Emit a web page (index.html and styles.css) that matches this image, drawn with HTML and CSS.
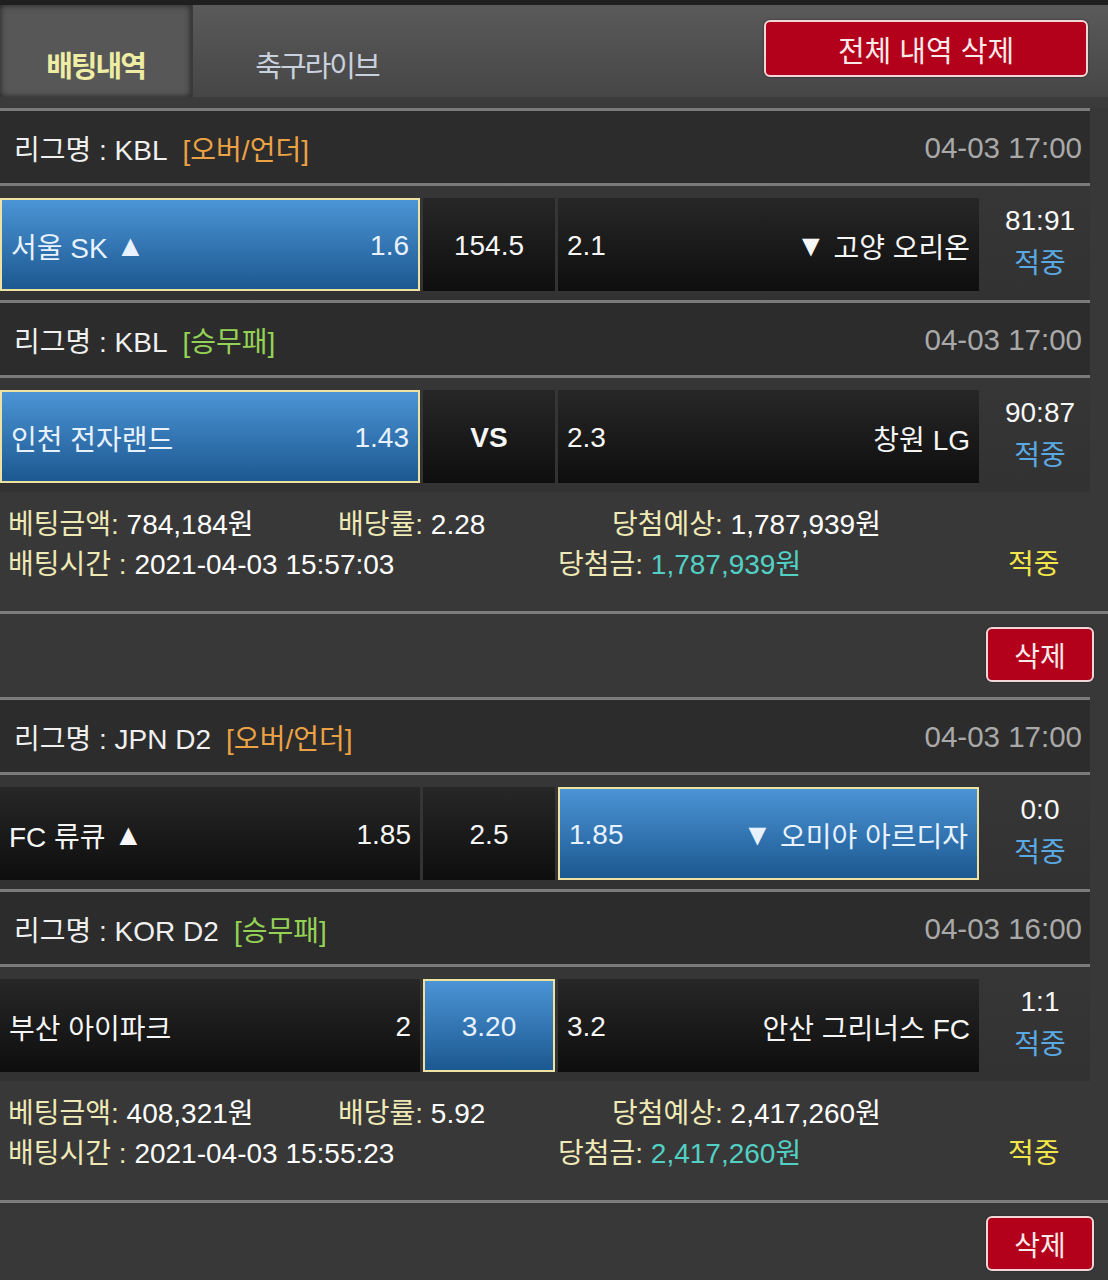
FILE: index.html
```html
<!DOCTYPE html>
<html lang="ko">
<head>
    <meta charset="UTF-8">
    <title>배팅내역</title>
    <link rel="stylesheet" href="styles.css">
</head>
<body>
    <div class="topbar">
        <div class="tabs">
            <div class="tab active">배팅내역</div>
            <div class="tab">축구라이브</div>
        </div>
        <button class="btn-red btn-all">전체 내역 삭제</button>
    </div>
    <div class="band"></div>

    <section class="bet">
        <div class="league">
            <span class="lname">리그명 : KBL</span>
            <span class="ltype over">[오버/언더]</span>
            <span class="date">04-03 17:00</span>
        </div>
        <div class="match">
            <div class="cell home sel"><span>서울 SK <i class="arrow">▲</i></span><span>1.6</span></div>
            <div class="cell mid">154.5</div>
            <div class="cell away"><span>2.1</span><span><i class="arrow">▼</i> 고양 오리온</span></div>
            <div class="score"><span>81:91</span><span class="hit">적중</span></div>
        </div>
        <div class="league">
            <span class="lname">리그명 : KBL</span>
            <span class="ltype wdl">[승무패]</span>
            <span class="date">04-03 17:00</span>
        </div>
        <div class="match">
            <div class="cell home sel"><span>인천 전자랜드</span><span>1.43</span></div>
            <div class="cell mid vs">VS</div>
            <div class="cell away"><span>2.3</span><span>창원 LG</span></div>
            <div class="score"><span>90:87</span><span class="hit">적중</span></div>
        </div>
        <div class="info">
            <div class="info-row">
                <span class="col-a"><em>베팅금액:</em> 784,184원</span>
                <span class="col-b"><em>배당률:</em> 2.28</span>
                <span><em>당첨예상:</em> 1,787,939원</span>
            </div>
            <div class="info-row">
                <span class="col-wide"><em>배팅시간 :</em> 2021-04-03 15:57:03</span>
                <span class="col-win"><em>당첨금:</em> <b class="won">1,787,939원</b></span>
                <span class="result">적중</span>
            </div>
        </div>
        <div class="actions">
            <button class="btn-red btn-del">삭제</button>
        </div>
    </section>

    <section class="bet">
        <div class="league">
            <span class="lname">리그명 : JPN D2</span>
            <span class="ltype over">[오버/언더]</span>
            <span class="date">04-03 17:00</span>
        </div>
        <div class="match">
            <div class="cell home"><span>FC 류큐 <i class="arrow">▲</i></span><span>1.85</span></div>
            <div class="cell mid">2.5</div>
            <div class="cell away sel"><span>1.85</span><span><i class="arrow">▼</i> 오미야 아르디자</span></div>
            <div class="score"><span>0:0</span><span class="hit">적중</span></div>
        </div>
        <div class="league">
            <span class="lname">리그명 : KOR D2</span>
            <span class="ltype wdl">[승무패]</span>
            <span class="date">04-03 16:00</span>
        </div>
        <div class="match">
            <div class="cell home"><span>부산 아이파크</span><span>2</span></div>
            <div class="cell mid sel">3.20</div>
            <div class="cell away"><span>3.2</span><span>안산 그리너스 FC</span></div>
            <div class="score"><span>1:1</span><span class="hit">적중</span></div>
        </div>
        <div class="info">
            <div class="info-row">
                <span class="col-a"><em>베팅금액:</em> 408,321원</span>
                <span class="col-b"><em>배당률:</em> 5.92</span>
                <span><em>당첨예상:</em> 2,417,260원</span>
            </div>
            <div class="info-row">
                <span class="col-wide"><em>배팅시간 :</em> 2021-04-03 15:55:23</span>
                <span class="col-win"><em>당첨금:</em> <b class="won">2,417,260원</b></span>
                <span class="result">적중</span>
            </div>
        </div>
        <div class="actions">
            <button class="btn-red btn-del">삭제</button>
        </div>
    </section>
</body>
</html>
```

FILE: styles.css
```css
body {
    margin: 0;
    background: #383838;
    color: #f4f4f4;
    font-family: "Liberation Sans", "Noto Sans CJK KR", sans-serif;
    font-size: 28px;
    overflow: hidden;
}

.topbar {
    display: flex;
    justify-content: space-between;
    align-items: flex-start;
    height: 92px;
    border-top: 5px solid #1f1f1f;
    background: linear-gradient(#5a5a5a, #464646);
}

.tabs {
    display: flex;
    height: 92px;
}

.tab {
    width: 248px;
    display: flex;
    align-items: center;
    justify-content: center;
    padding-top: 26px;
    box-sizing: border-box;
    color: #c9d0de;
    font-size: 29px;
    letter-spacing: -2px;
}

.tab.active {
    width: 193px;
    background: #575757;
    box-shadow: inset 0 0 6px #1e1e1e;
    border-right: 2px solid #3a3a3a;
    color: #eeeda4;
    font-weight: bold;
}

.btn-red {
    background: #b3001b;
    color: #fbeaea;
    border: 2px solid #f1d6d8;
    border-radius: 6px;
    font-family: inherit;
    font-size: 28px;
    box-shadow: 0 0 2px #222;
    cursor: pointer;
}

.btn-all {
    width: 324px;
    height: 57px;
    margin: 15px 20px 0 0;
    font-size: 29px;
}

.band {
    height: 11px;
    background: #3b3b3b;
}

.league {
    width: 1090px;
    height: 78px;
    box-sizing: border-box;
    display: flex;
    align-items: center;
    padding: 2px 8px 0 14px;
    border-top: 3px solid #7b7b7b;
    border-bottom: 3px solid #7b7b7b;
    background: #2c2c2c;
}

.lname {
    color: #f0f0f0;
}

.ltype {
    margin-left: 15px;
}

.ltype.over { color: #eba244; }
.ltype.wdl { color: #94d255; }

.date {
    margin-left: auto;
    color: #a9a9a9;
    font-size: 29.5px;
}

.match {
    width: 1090px;
    height: 114px;
    box-sizing: border-box;
    padding: 12px 0 9px;
    display: flex;
    gap: 3px;
    background: linear-gradient(#363636, #323232);
}

.cell {
    display: flex;
    align-items: center;
    justify-content: space-between;
    padding: 2px 9px 0;
    box-sizing: border-box;
    background: linear-gradient(#272727, #0e0e0e);
    color: #f6f6f6;
}

.cell.home { width: 420px; }
.cell.mid { width: 132px; justify-content: center; }
.cell.away { width: 421px; }

.cell.vs { font-weight: bold; }

.cell.sel {
    background: linear-gradient(#4b94d5, #1c5891);
    border: 2px solid #ede2a2;
    color: #e8f2ff;
}

.arrow {
    font-style: normal;
    font-family: "Liberation Sans", sans-serif;
    font-size: 30px;
    position: relative;
    top: -2px;
}

.score {
    flex: 1;
    display: flex;
    flex-direction: column;
    align-items: center;
    justify-content: center;
    gap: 4px;
    padding-left: 8px;
    margin-top: -12px;
    margin-bottom: -9px;
    color: #f8f8f8;
}

.score .hit { color: #5aa9e3; }

.info {
    padding: 13px 8px 26px;
    border-bottom: 3px solid #7d7d7d;
}

.info-row {
    display: flex;
    line-height: 40px;
    color: #ffffff;
}

.info em {
    font-style: normal;
    color: #efe9b6;
}

.col-a { width: 330px; }
.col-b { width: 274px; }
.col-wide { width: 550px; }
.col-win { width: 450px; }

.won {
    font-weight: normal;
    color: #52d0c4;
}

.result { color: #f2e64a; }

.actions {
    height: 83px;
    box-sizing: border-box;
    display: flex;
    justify-content: flex-end;
    padding: 13px 14px 0;
}

.btn-del {
    width: 108px;
    height: 55px;
}
```
